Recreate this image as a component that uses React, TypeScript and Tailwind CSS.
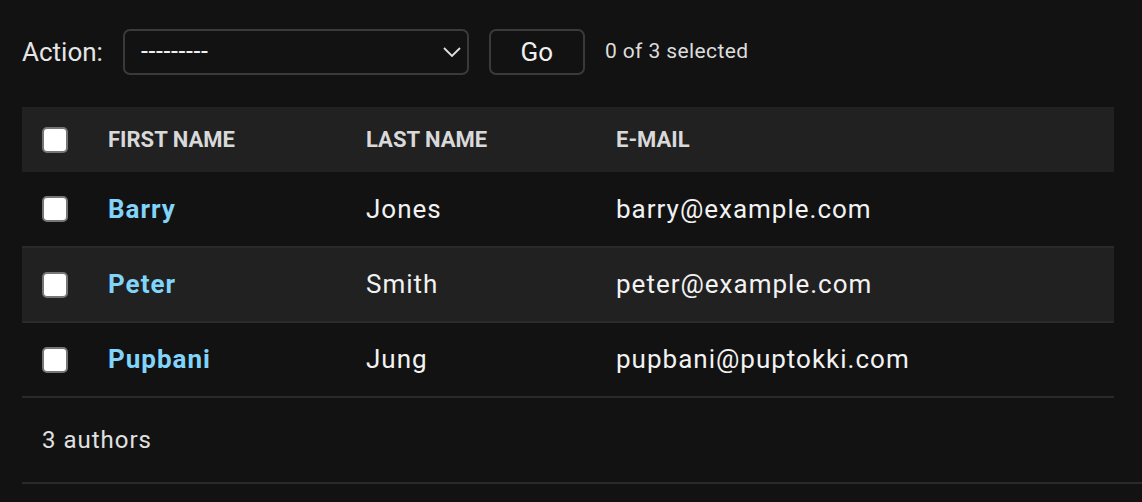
const authors = [
  { first: 'Barry', last: 'Jones', email: 'barry@example.com' },
  { first: 'Peter', last: 'Smith', email: 'peter@example.com' },
  { first: 'Pupbani', last: 'Jung', email: 'pupbani@puptokki.com' },
];

function Checkbox() {
  return (
    <span className="block w-[26px] h-[26px] rounded-[5px] bg-white border-2 border-[#767676]" />
  );
}

export default function App() {
  return (
    <div
      className="min-h-screen bg-[#121212] text-[#eeeeee] pt-[29px]"
      style={{ fontFamily: 'Roboto, "Liberation Sans", sans-serif' }}
    >
      {/* Actions */}
      <div className="flex items-center h-[46px] pl-[22px]">
        <span className="text-[26px] text-[#e6e6e6]">Action:</span>
        <div className="ml-[20px] w-[346px] h-[46px] rounded-[7px] border-2 border-[#3a3a3a] flex items-center justify-between pl-[16px] pr-[6px]">
          <span className="text-[25px] text-[#f0f0f0] tracking-[0.6px]">---------</span>
          <svg width="18" height="10" viewBox="0 0 18 10" fill="none" className="text-[#e0e0e0]">
            <path d="M1 1 L9 9 L17 1" stroke="currentColor" strokeWidth="1.8" />
          </svg>
        </div>
        <button className="ml-[20px] w-[96px] h-[46px] rounded-[7px] border-2 border-[#3a3a3a] text-[26px] text-[#f0f0f0]">
          Go
        </button>
        <span className="ml-[20px] text-[21px] text-[#dddddd] tracking-[0.4px]">0 of 3 selected</span>
      </div>

      {/* Table */}
      <div className="ml-[22px] mr-[28px] mt-[32px]">
        <table className="w-full border-collapse">
          <thead>
            <tr className="bg-[#212121] h-[65px]">
              <th className="w-[86px] pl-[20px] text-left align-middle">
                <Checkbox />
              </th>
              <th className="w-[258px] text-left text-[22px] font-bold text-[#d9d9d9] uppercase">First name</th>
              <th className="w-[250px] text-left text-[22px] font-bold text-[#d9d9d9] uppercase">Last name</th>
              <th className="text-left text-[22px] font-bold text-[#d9d9d9] uppercase">E-mail</th>
            </tr>
          </thead>
          <tbody>
            {authors.map((a, i) => (
              <tr
                key={a.email}
                className={`h-[75px] border-b-2 border-[#2a2a2a] ${i % 2 === 1 ? 'bg-[#212121]' : 'bg-[#121212]'}`}
              >
                <td className="pl-[20px] align-middle">
                  <Checkbox />
                </td>
                <td className="text-[26px] font-bold text-[#81d4fa] tracking-[1px]">{a.first}</td>
                <td className="text-[26px] text-[#f2f2f2] tracking-[1px]">{a.last}</td>
                <td className="text-[26px] text-[#f2f2f2] tracking-[1px]">{a.email}</td>
              </tr>
            ))}
          </tbody>
        </table>
        <div className="h-[84px] flex items-center pl-[20px] text-[24px] text-[#e0e0e0] tracking-[1px]">
          3 authors
        </div>
      </div>
      <div className="ml-[22px] border-t-2 border-[#2a2a2a]" />
    </div>
  );
}
